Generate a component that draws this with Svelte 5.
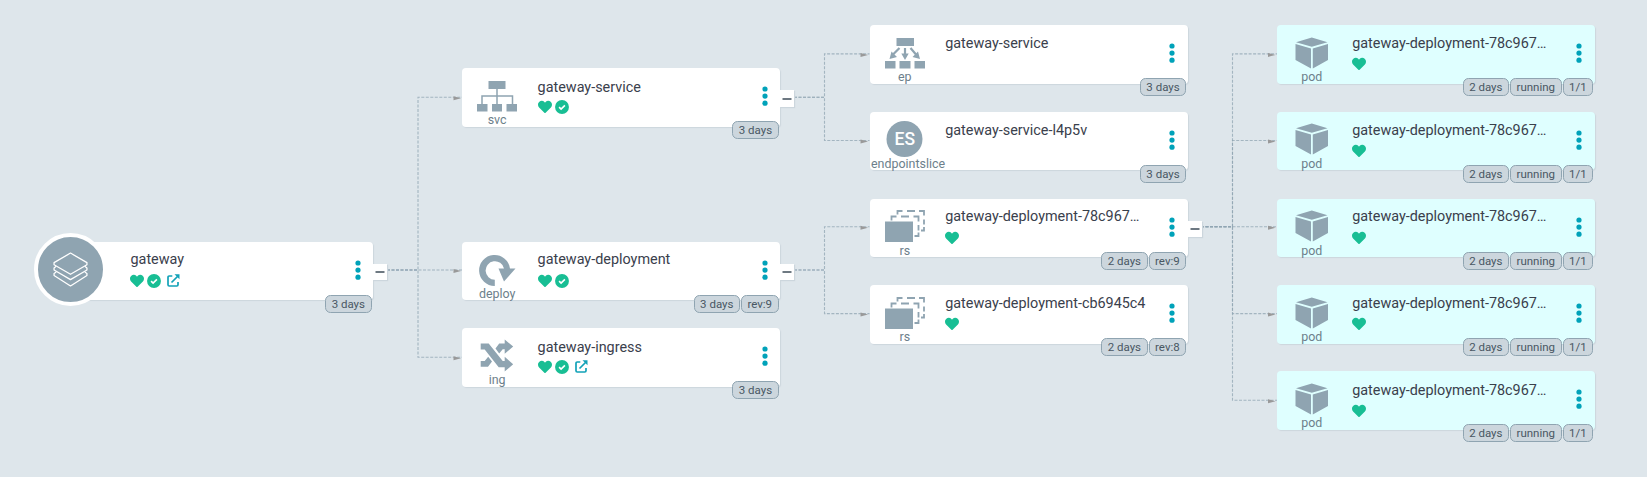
<script>
  const days = (n) => `${n} days`;
  const pod = 'gateway-deployment-78c967…';
  const podRows = [[25, 48], [111.8, 135], [198.6, 221], [285, 308], [371.4, 395]];
  // y is the card's top edge, base the baseline of its title
  const nodes = [
    { x: 55.3, y: 241.7, base: 264, kind: 'app', title: 'gateway', marks: ['heart', 'check', 'link'], tags: [days(3)], toggle: true },
    { x: 462.4, y: 68.2, base: 92, kind: 'svc', title: 'gateway-service', marks: ['heart', 'check'], tags: [days(3)], toggle: true },
    { x: 462.4, y: 241.7, base: 264, kind: 'deploy', title: 'gateway-deployment', marks: ['heart', 'check'], tags: [days(3), 'rev:9'], toggle: true },
    { x: 462.4, y: 328.1, base: 352, kind: 'ing', title: 'gateway-ingress', marks: ['heart', 'check', 'link'], tags: [days(3)] },
    { x: 870, y: 25, base: 48, kind: 'ep', title: 'gateway-service', marks: [], tags: [days(3)] },
    { x: 870, y: 111.8, base: 135, kind: 'endpointslice', title: 'gateway-service-l4p5v', marks: [], tags: [days(3)] },
    { x: 870, y: 198.6, base: 221, kind: 'rs', title: pod, marks: ['heart'], tags: [days(2), 'rev:9'], toggle: true },
    { x: 870, y: 285, base: 308, kind: 'rs', title: 'gateway-deployment-cb6945c4', marks: ['heart'], tags: [days(2), 'rev:8'] },
    ...podRows.map(([y, base]) => ({ x: 1277, y, base, kind: 'pod', title: pod, marks: ['heart'], tags: [days(2), 'running', '1/1'] }))
  ];
  const groups = [
    { from: 387, mid: 418, to: 462.5, y: 270, ends: [97.3, 270, 357.3] },
    { from: 794, mid: 824.5, to: 869.5, y: 97.3, ends: [53.9, 140.5] },
    { from: 794, mid: 824.5, to: 869.5, y: 270, ends: [226.8, 313.6] },
    { from: 1201, mid: 1232.5, to: 1277, y: 226.8, ends: [53.9, 140.5, 226.8, 313.6, 400.3] }
  ];
</script>

<div class="tree">
  <svg class="edges" width="1647" height="477">
    {#each groups as g}
      {#each g.ends as e}
        <path class="edge" d="M{g.from} {g.y}H{g.mid}V{e}H{g.to}" />
        <path class="arrow" d="M{g.to - 9} {e - 1}L{g.to - 1.5} {e + 1}L{g.to - 9} {e + 3}Z" />
      {/each}
    {/each}
  </svg>

  {#each nodes as n}
    <div class="node" class:pod={n.kind === 'pod'} style="left:{n.x}px;top:{n.y}px">
      <div class="kind">
        {#if n.kind === 'app'}
          <div class="app">
            <svg width="35" height="35" viewBox="0 0 33 33" fill="none" stroke="#fff" stroke-width="1.200" stroke-linejoin="round">
              <path d="M16.500 1 32 10v2L16.500 21 1 12v-2Z" />
              <path d="M3 13.500 1 15v2l15.500 9L32 17v-2l-2-1.500" />
              <path d="M3 18.800 1 20.200v2L16.500 32 32 22.200v-2l-2-1.400" />
            </svg>
          </div>
        {:else}
          <svg class="glyph" width="42" height="36" viewBox="0 0 42 36" fill="#8fa4b1">
            {#if n.kind === 'svc'}
              <path d="M12.500 3h17v8h-17zM1 26h10.500v7.500H1zM16 26h10v7.500H16zM30.500 26H41v7.500H30.500z" />
              <path d="M21 11v15M6 26v-8h30.500v8" fill="none" stroke="#8fa4b1" stroke-width="1.500" />
            {:else if n.kind === 'ep'}
              <path d="M12.500 3h17.500v8h-17.500zM1 26h10.500v7.500H1zM15.500 26h11v7.500h-11zM30.500 26H41v7.500H30.500z" />
              <path d="M15.500 13 9 19.500M21 13v7M26.500 13 32 19.500" stroke="#8fa4b1" stroke-width="2.200" />
              <path d="M5.500 24l2-7.500 5.500 5.500zM17.300 18.500h7.400L21 25zM36 24l-7.500-2 5.500-5.500z" />
            {:else if n.kind === 'deploy'}
              <path d="M18.800 35A15.500 15.500 0 1 1 34 17.500h5.500l-11.500 13-5.500-13h5.500a9.300 9.300 0 1 0-9.200 11.300z" />
            {:else if n.kind === 'ing'}
              <path d="M28.700 1.500v4h-5.500l-3.700 5 3.700 5 3.500-4.200h2v4.500l8.500-7.200z" />
              <path d="M4.700 5.500h8l14 17.500h2v-4.200l8.500 7.500-8.500 7.200v-4.300h-6l-14-17.700h-4zM4.700 23h4l3.500-4.300 3.800 4.800-4 5.200H4.700z" />
            {:else if n.kind === 'rs'}
              <path d="M1 13.500h28V34H1z" />
              <g fill="none" stroke="#8fa4b1" stroke-width="1.800">
                <path d="M7.500 12.500v-4h5M17 8.500h8M29.500 8.500h5v5M34.500 17v5.500M34.500 24.500v3.500h-4" />
                <path d="M13.500 6.500V3h5M23 3h8M35 3h5v4.500M40 11.500v5M40 19v3.500h-3" />
              </g>
            {:else if n.kind === 'pod'}
              <path d="M20.800 2.500 36.500 7.200 20.800 11.800 5 7.200zM4.500 9 20 13.500v20L4.500 25zM37 9 21.800 13.500v20L37 25z" />
            {:else}
              <circle cx="20.500" cy="18" r="18" />
              <text x="20.800" y="24" fill="#fff" text-anchor="middle" font-size="17.500" font-weight="500">ES</text>
            {/if}
          </svg>
          <span class="label">{n.kind}</span>
        {/if}
      </div>
      <div class="body">
        <div class="title" style="padding-top:{n.base - n.y - 12.9}px">{n.title}</div>
        <div class="marks">
          {#each n.marks as m}
            {#if m === 'heart'}
              <svg width="14" height="14" viewBox="0 0 512 512"><path fill="#18be94" d="M462.300 62.600C407.500 15.900 326 24.300 275.700 76.200L256 96.500l-19.700-20.300C186.100 24.300 104.500 15.900 49.700 62.600c-62.800 53.600-66.100 149.800-9.900 207.900l193.500 199.800c12.500 12.900 32.800 12.900 45.300 0l193.500-199.800c56.300-58.100 53-154.300-9.800-207.900z" /></svg>
            {:else if m === 'check'}
              <svg width="14" height="14" viewBox="0 0 512 512"><circle cx="256" cy="256" r="254" fill="#18be94" /><path d="M150 262l72 70 140-138" fill="none" stroke="#fff" stroke-width="60" /></svg>
            {:else}
              <svg class="link" width="13" height="13" viewBox="0 0 13 13" fill="none" stroke="#12a2b8" stroke-width="1.700"><path d="M5.300 2H2.200Q1 2 1 3.200v7.600Q1 12 2.200 12h7.600q1.200 0 1.200-1.200V8M4.500 8.500 10.500 2.500" /><path d="M7.500.300h5v5z" fill="#12a2b8" stroke="none" /></svg>
            {/if}
          {/each}
        </div>
      </div>
      <svg class="menu" width="6" height="20" viewBox="0 0 6 20" fill="#00a2b9"><circle cx="3" cy="3" r="2.600" /><circle cx="3" cy="10.100" r="2.600" /><circle cx="3" cy="17.200" r="2.600" /></svg>
      {#if n.toggle}
        <div class="toggle"><svg width="10" height="4" viewBox="0 0 10 4"><path d="M.5 1.200h9v1.600h-9z" fill="#495763" /></svg></div>
      {/if}
      <div class="tags">
        {#each n.tags as t}<span>{t}</span>{/each}
      </div>
    </div>
  {/each}
</div>

<style>
  :global(body) { background: #dee6eb; }
  .tree { position: relative; width: 1647px; height: 477px; overflow: hidden; background: #dee6eb; font-family: Roboto, sans-serif; }
  .edges { position: absolute; left: 0; top: 0; }
  .edge { fill: none; stroke: #8fa4b1; stroke-width: 1.100; stroke-dasharray: 3 1.500; opacity: .75; }
  .arrow { fill: #999; }
  .node { position: absolute; box-sizing: border-box; width: 317.500px; height: 58.500px; display: flex; background: #fff; border-radius: 4px; box-shadow: 1px 1px 1px #ccd6dd; }
  .node.pod { background: #dfffff; }
  .kind { width: 67.500px; margin-left: 1px; flex: none; display: flex; flex-direction: column; align-items: center; padding-top: 9.700px; box-sizing: border-box; }
  .glyph { flex: none; display: block; }
  .label { align-self: stretch; text-align: center; font-size: 12.450px; line-height: 14px; color: #6d7f8b; margin-top: -.7px; white-space: nowrap; }
  .app { flex: none; box-sizing: border-box; width: 73px; height: 73px; margin: -18px 0 0 -39px; border: 4.500px solid #fff; border-radius: 50%; background: #8fa4b1; display: flex; align-items: center; justify-content: center; }
  .body { padding-left: 6.700px; flex: 1; min-width: 0; }
  .title { box-sizing: border-box; height: 32.300px; font-size: 14.400px; line-height: 17px; color: #3a404c; white-space: nowrap; }
  .marks { display: flex; gap: 3px; height: 14px; }
  .link { margin-left: 3px; }
  .menu { flex: none; margin: 18px 12.300px 0 0; }
  .toggle { position: absolute; left: 100%; top: 22.200px; width: 14px; height: 16.500px; background: #fff; display: flex; align-items: center; justify-content: center; box-shadow: 1px 1px 1px #ccd6dd; }
  .tags { position: absolute; right: 1.300px; top: 53px; display: flex; gap: 1px; }
  .tags span { box-sizing: border-box; height: 18px; padding: 0 5.500px; border: 1px solid #8fa4b1; border-radius: 5.500px; background: #ccd6dd; color: #495763; font-size: 11.500px; line-height: 16px; white-space: nowrap; }
</style>
